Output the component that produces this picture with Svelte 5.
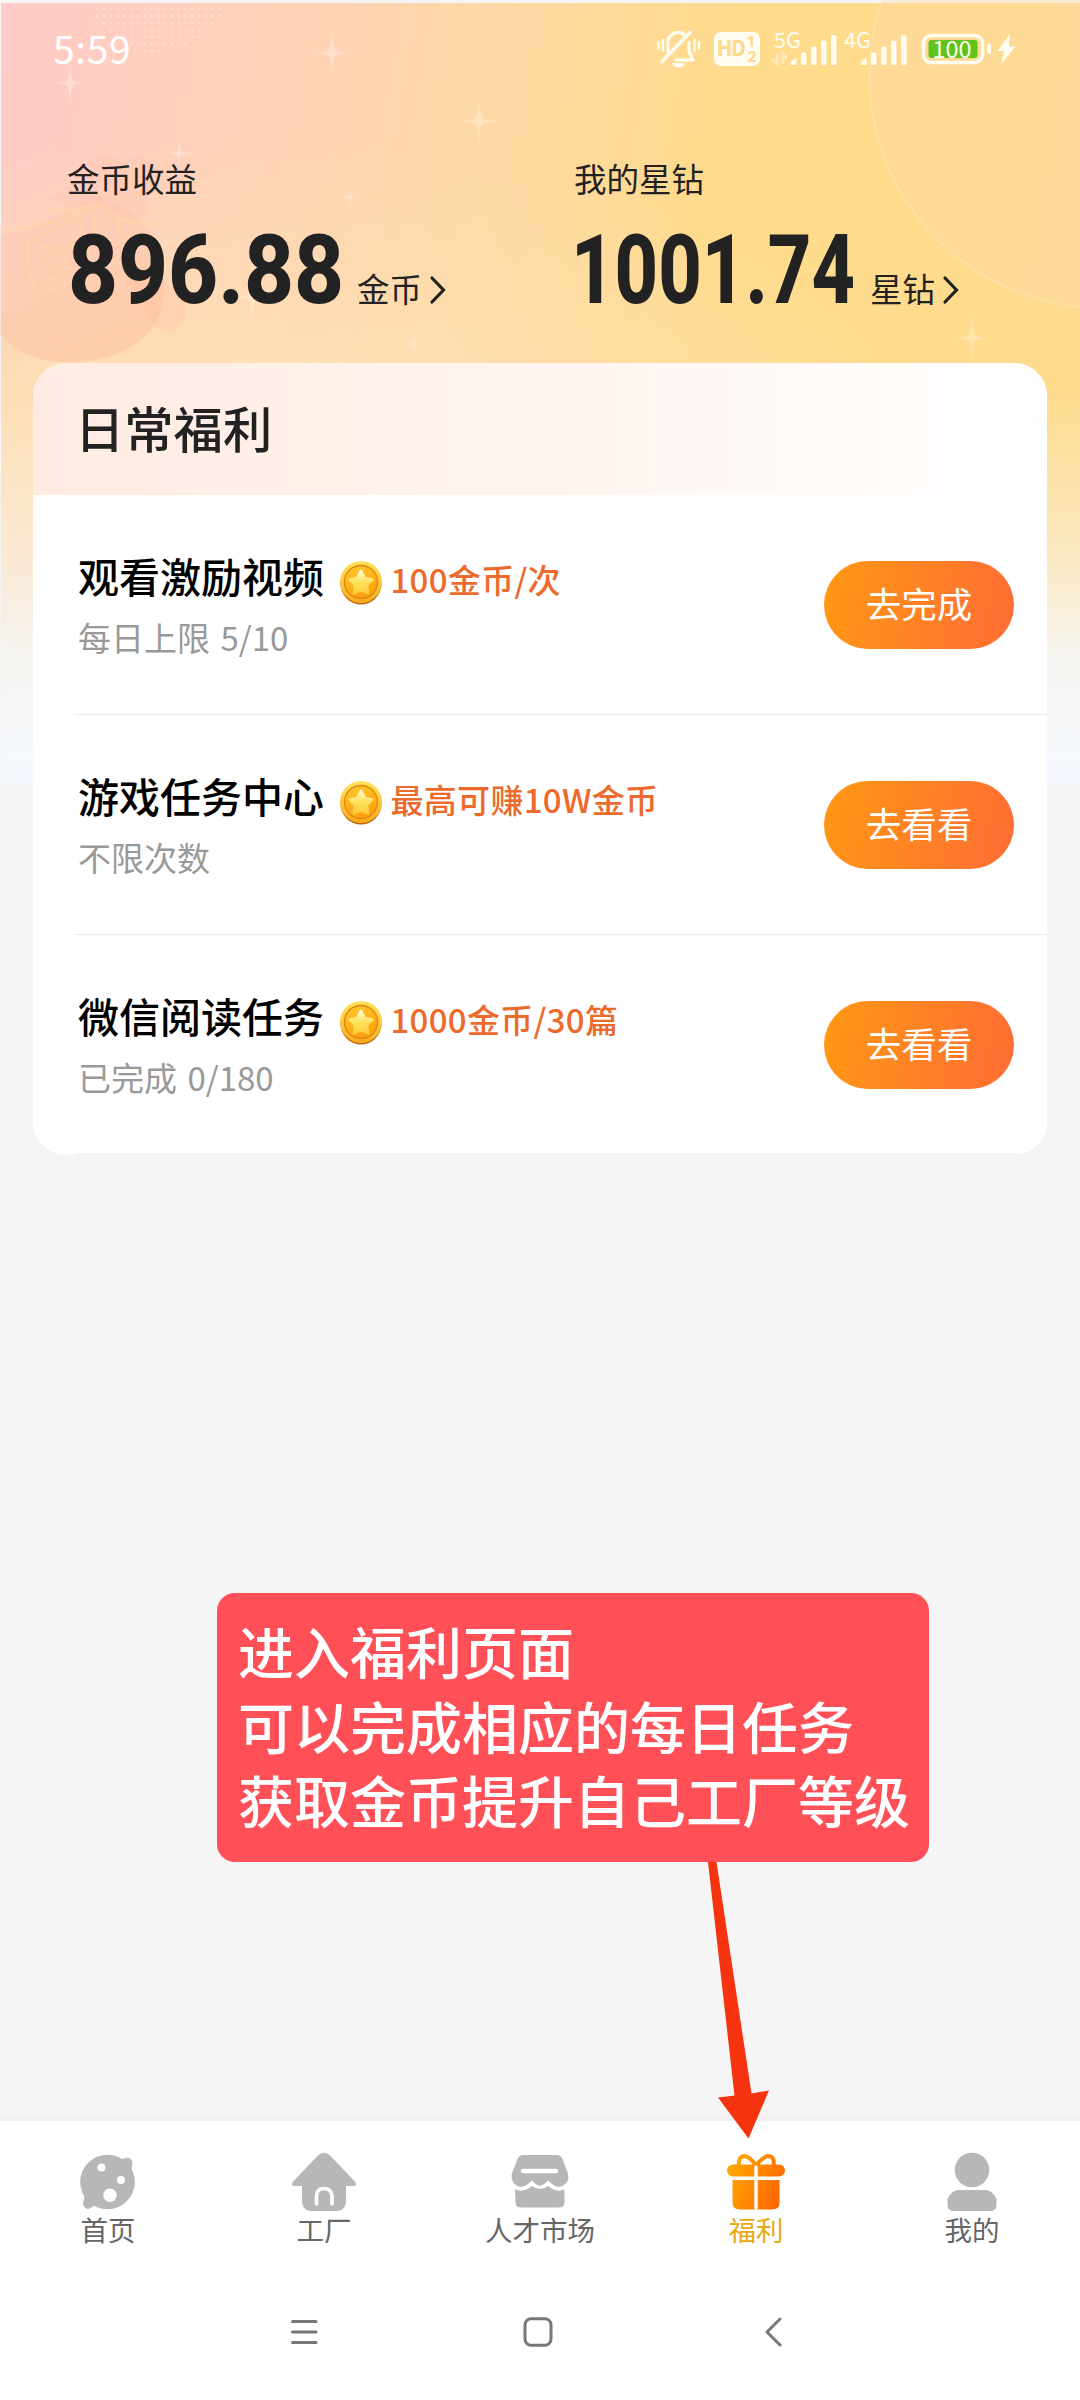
<script lang="ts">
	const balances = [
		{ id: 'coin', label: '金币收益', value: '896.88', unit: '金币', width: 288, start: 1, length: 276 },
		{ id: 'diamond', label: '我的星钻', value: '1001.74', unit: '星钻', width: 294, start: -3, length: 284 },
	];

	const tasks = [
		{ id: 'video', title: '观看激励视频', reward: '100金币/次', hint: '每日上限 5/10', action: '去完成' },
		{ id: 'game', title: '游戏任务中心', reward: '最高可赚10W金币', hint: '不限次数', action: '去看看' },
		{ id: 'read', title: '微信阅读任务', reward: '1000金币/30篇', hint: '已完成 0/180', action: '去看看' },
	];

	const tabs = [
		{ id: 'home', label: '首页' },
		{ id: 'factory', label: '工厂' },
		{ id: 'market', label: '人才市场' },
		{ id: 'welfare', label: '福利' },
		{ id: 'mine', label: '我的' },
	];

	const tipLines = ['进入福利页面', '可以完成相应的每日任务', '获取金币提升自己工厂等级'];

	// cx, cy, half width, half height, opacity
	const sparkles = [
		[70, 83, 17, 21, 0.3],
		[332, 53, 20, 23, 0.3],
		[479, 121, 21, 26, 0.28],
		[179, 153, 11, 13, 0.3],
		[350, 197, 9, 11, 0.25],
		[252, 297, 20, 31, 0.25],
		[414, 344, 10, 12, 0.25],
		[824, 270, 20, 12, 0.2],
		[972, 338, 20, 25, 0.25],
	];

	// each row: start x, number of dots
	const dotRows = [
		[97, 19], [97, 19], [104, 17], [111, 14], [118, 13], [131, 9], [145, 3],
	];

	// horizontal squeeze of the balance digits
	const squeeze = 0.89;

	let active = $state('welfare');

	function sparklePath(cx: number, cy: number, w: number, h: number) {
		const k = w * 0.2;
		return `M${cx} ${cy - h}Q${cx + 1} ${cy - k} ${cx + k} ${cy - k * 0.7}Q${cx + k} ${cy - 1} ${cx + w} ${cy}Q${cx + k} ${cy + 1} ${cx + k} ${cy + k * 0.7}Q${cx + 1} ${cy + k} ${cx} ${cy + h}Q${cx - 1} ${cy + k} ${cx - k} ${cy + k * 0.7}Q${cx - k} ${cy + 1} ${cx - w} ${cy}Q${cx - k} ${cy - 1} ${cx - k} ${cy - k * 0.7}Q${cx - 1} ${cy - k} ${cx} ${cy - h}Z`;
	}
</script>

<div class="screen">
	<div class="hero-bg">
		<svg class="hero-art" width="1080" height="390" viewBox="0 0 1080 390">
			<defs>
				<linearGradient id="bag" x1="0" y1="0" x2="0.3" y2="1">
					<stop offset="0" stop-color="#ffa898" stop-opacity="0.1" />
					<stop offset="1" stop-color="#ffa088" stop-opacity="0.25" />
				</linearGradient>
			</defs>
			<path d="M0 236C40 226 75 205 98 193C125 205 150 222 158 250C166 275 168 305 154 325C128 370 30 376 0 334Z" fill="url(#bag)" />
			<path d="M122 270Q150 260 168 282Q196 305 182 322Q172 343 154 325Q136 298 122 270Z" fill="#ffb09a" opacity="0.18" />
			<path d="M82 165Q105 150 124 160Q148 148 158 172Q142 190 150 216Q115 226 96 206Q60 212 48 198Q76 186 82 165Z" fill="#ffa898" opacity="0.09" />
			<g fill="none" stroke="#ffd8a8" stroke-width="4" stroke-linecap="round" opacity="0.5">
				<path d="M0 232Q55 225 98 206Q125 225 156 224" />
				<path d="M44 208Q70 214 96 204M118 214Q116 232 132 244M94 212Q98 232 88 250" />
				<path d="M27 242L80 218Q86 248 82 276L38 296Q26 270 27 242Z" />
				<path d="M38 250Q52 240 56 250T74 244M36 268L52 254M44 282L70 272M52 262L60 272M44 272L66 262" />
			</g>
			<g fill="#fff" opacity="0.3">
				{#each dotRows as [start, count], r}
					{#each Array(count) as _, c}
						<circle cx={start + c * 6.8} cy={9 + r * 7} r="1.3" />
					{/each}
				{/each}
			</g>
			<circle cx="1102.5" cy="75" r="233" fill="#fcd9a6" fill-opacity="0.4" stroke="#ffe8bd" stroke-width="2" stroke-opacity="0.4" />
			{#each sparkles as [cx, cy, w, h, opacity]}
				<path d={sparklePath(cx, cy, w, h)} fill="#fff" {opacity} />
			{/each}
		</svg>
	</div>

	<header class="status-bar">
		<span class="clock">5:59</span>
		<svg class="status-icons" width="364" height="46" viewBox="0 0 364 46">
			<!-- muted bell -->
			<g transform="translate(0 1.5)">
				<g fill="none" stroke="#fffdf2" stroke-linecap="round" stroke-width="3.2">
					<path d="M12 25V17A10 10 0 0 1 29 9M33 16V25L37 33.5H20" stroke-linejoin="round" />
					<path d="M6 35L34 6" stroke-width="3.6" />
					<path d="M2.5 16V22M7 13.5V24M43 16V22M38.5 13.5V24" stroke-width="2.4" />
				</g>
				<path d="M16 36.5H29Q27.5 41 22.5 41T16 36.5Z" fill="#fffdf2" />
			</g>
			<!-- HD badge -->
			<rect x="58" y="7" width="46" height="34" rx="7" fill="#fffdf2" />
			<g class="badge-text">
				<text x="61.5" y="31" font-size="21" textLength="28" lengthAdjust="spacingAndGlyphs">HD</text>
				<text x="91.5" y="22" font-size="14.5">1</text>
				<text x="91.5" y="37" font-size="14.5">2</text>
			</g>
			<g class="net-text">
				<text x="118" y="22.5" textLength="27" lengthAdjust="spacingAndGlyphs">5G</text>
				<text x="188" y="22.5" textLength="27" lengthAdjust="spacingAndGlyphs">4G</text>
			</g>
			<path d="M121 29V39L116 34M127 39V29L131 33" fill="none" stroke="#fff" stroke-opacity="0.4" stroke-width="3" />
			<g fill="#fffdf2">
				{#each [134, 204] as x}
					<path d="M{x + 1} 40Q{x - 1} 36 {x + 6.5} 33V40Z" />
					<rect x={x + 11} y="27.5" width="5.5" height="12.5" rx="2" />
					<rect x={x + 21} y="21.5" width="5.5" height="18.5" rx="2" />
					<rect x={x + 31} y="15.5" width="5.5" height="24.5" rx="2" />
					<rect x={x + 41} y="10" width="5.5" height="30" rx="2" />
				{/each}
			</g>
			<!-- battery -->
			<rect x="267.5" y="10.5" width="59" height="27" rx="8" fill="none" stroke="#fffdf2" stroke-width="3.5" />
			<rect x="272.5" y="15" width="49" height="18" rx="3" fill="#62c21d" />
			<rect x="331" y="19" width="4" height="10" rx="2" fill="#fffdf2" />
			<text class="battery-text" x="276.5" y="32.5" textLength="39" lengthAdjust="spacingAndGlyphs">100</text>
			<path d="M354 9L341.5 26H348L345.5 39L359.5 21.5H353Z" fill="#fffdf2" />
		</svg>
	</header>

	<section class="balances">
		{#each balances as item (item.id)}
			<div class="balance">
				<span class="balance-label">{item.label}</span>
				<div class="balance-row">
					<svg class="balance-value" width={item.width} height="78" viewBox="0 0 {item.width} 78">
						<text
							transform="translate({item.start} 73) scale({squeeze} 1)"
							textLength={item.length / squeeze}
							lengthAdjust="spacingAndGlyphs">{item.value}</text>
					</svg>
					<span class="balance-unit">{item.unit}</span>
					<svg class="chevron" width="18" height="30" viewBox="0 0 18 30">
						<path d="M3 3L14.5 15L3 27" fill="none" stroke="#222" stroke-width="3.2" stroke-linecap="round" />
					</svg>
				</div>
			</div>
		{/each}
	</section>

	<main class="card">
		<h2 class="card-title">日常福利</h2>
		{#each tasks as task (task.id)}
			<div class="task">
				<div class="task-info">
					<div class="task-head">
						<span class="task-title">{task.title}</span>
						<svg class="coin" width="44" height="46" viewBox="0 0 44 46">
							<defs>
								<linearGradient id="coin-rim" x1="0" y1="0" x2="0" y2="1">
									<stop offset="0" stop-color="#ffe45c" />
									<stop offset="1" stop-color="#f9a91a" />
								</linearGradient>
								<linearGradient id="coin-face" x1="0" y1="0" x2="0.4" y2="1">
									<stop offset="0" stop-color="#ffca2e" />
									<stop offset="1" stop-color="#ff9f0e" />
								</linearGradient>
								<linearGradient id="coin-star" x1="0" y1="0" x2="0" y2="1">
									<stop offset="0" stop-color="#fff9cf" />
									<stop offset="0.5" stop-color="#ffe15a" />
									<stop offset="1" stop-color="#ffcf3c" />
								</linearGradient>
							</defs>
							<circle cx="22" cy="24" r="20.5" fill="#b9680f" />
							<circle cx="22" cy="22" r="21" fill="url(#coin-rim)" />
							<circle cx="22" cy="22" r="16.5" fill="url(#coin-face)" stroke="#d98a12" stroke-width="1.3" />
							<path
								d="M22 11L25.7 18.2L33 19.6L27.8 25.2L28.8 33L22 29.8L15.2 33L16.2 25.2L11 19.6L18.3 18.2Z"
								fill="url(#coin-star)"
								stroke="url(#coin-star)"
								stroke-width="3"
								stroke-linejoin="round" />
						</svg>
						<span class="task-reward">{task.reward}</span>
					</div>
					<span class="task-hint">{task.hint}</span>
				</div>
				<button type="button" class="task-btn">{task.action}</button>
			</div>
		{/each}
	</main>

	<div class="tip">
		{#each tipLines as line}
			<span>{line}</span>
		{/each}
		<svg class="tip-arrow" width="62" height="278" viewBox="0 0 62 278">
			<path d="M0 0H8.5L43.5 231.5L61 228.5L40.5 276.5L10 235.5L26.5 233.5Z" fill="#f5330f" />
		</svg>
	</div>

	<nav class="tab-bar">
		{#each tabs as tab (tab.id)}
			<button type="button" class="tab" class:active={active === tab.id} onclick={() => (active = tab.id)}>
				<svg width="68" height="60" viewBox="0 0 68 60" fill="#b7b7b7">
					{#if tab.id === 'home'}
						<circle cx="33.5" cy="30" r="27.3" />
						<path d="M44.5 8.5L51.5 6.5A4.7 4.7 0 0 1 58 11.5L56.5 19.5ZM21.5 52.5L14.5 56.5A4.8 4.8 0 0 1 9.5 51.5L11.5 42.5Z" stroke="#b7b7b7" stroke-linejoin="round" />
						<circle cx="27.5" cy="15.5" r="4" fill="#fff" />
						<circle cx="47" cy="28" r="4" fill="#fff" />
						<circle cx="36" cy="43.3" r="6.7" fill="#fff" />
					{:else if tab.id === 'factory'}
						<path d="M28 3.5Q34 -2 40 3.5L65.5 30Q67 34 63 34H56V48Q56 59 46 59H22Q12 59 12 48V34H5Q1 34 2.5 30Z" />
						<path d="M26.5 52V44.5Q26.5 36.5 34 36.5T42 44.5V52" fill="none" stroke="#fff" stroke-width="3.6" stroke-linecap="round" />
					{:else if tab.id === 'market'}
						<path d="M17.5 3H50.5Q55 3 56.5 7L61.5 20Q64 27 60 31.5Q53 38 46 32L42 28.5L39.5 31Q34 36 29.5 32L26 28.5L22 32Q14.5 38 8 31.5Q4 26 6.5 20L11.5 7Q13 3 17.5 3Z" />
						<path d="M9 37.5Q18 41 26 34Q34 40 42 34Q50 41 58.5 37.5V50Q58.5 55.5 53 55.5H15Q9.5 55.5 9.5 50Z" />
						<path d="M17 19H50" stroke="#fff" stroke-width="4.4" stroke-linecap="round" />
					{:else if tab.id === 'welfare'}
						<defs>
							<linearGradient id="gift" gradientUnits="userSpaceOnUse" x1="6" y1="20" x2="60" y2="44">
								<stop offset="0" stop-color="#ffa800" />
								<stop offset="1" stop-color="#ff6600" />
							</linearGradient>
						</defs>
						<rect x="5" y="12.5" width="58" height="12" rx="6" fill="url(#gift)" />
						<path d="M10.5 28H57.5V50.5Q57.5 57.5 50 57.5H18Q10.5 57.5 10.5 50.5Z" fill="url(#gift)" />
						<path d="M17 14Q16 4 23 4Q27 4.5 34 13Q42 4.5 46 4Q53 4 51.5 14M30 14H38" fill="none" stroke="url(#gift)" stroke-width="4" />
						<path d="M34 15V56.5" stroke="#fff" stroke-width="3.4" stroke-linecap="round" />
					{:else}
						<circle cx="34" cy="18" r="17.3" />
						<path d="M20 38H48Q55 38.5 58.5 47.5V53Q58.5 59 52 59H16Q9.5 59 9.5 53V47.5Q13 38.5 20 38Z" />
					{/if}
				</svg>
				<span>{tab.label}</span>
			</button>
		{/each}
	</nav>

	<div class="system-nav">
		<svg width="30" height="30" viewBox="0 0 30 30">
			<path d="M3.5 4.5H27M3.5 15H27M3.5 25.5H27" />
		</svg>
		<svg width="30" height="30" viewBox="0 0 30 30">
			<rect x="2" y="1.8" width="26" height="26.4" rx="6" />
		</svg>
		<svg width="30" height="30" viewBox="0 0 30 30">
			<path d="M23 2L10 15L23 28" />
		</svg>
	</div>
</div>

<style>
	:global(body) {
		background: #f5f5f5;
	}

	.screen {
		position: relative;
		display: flex;
		flex-direction: column;
		width: 1080px;
		height: 2400px;
		box-sizing: border-box;
		padding-top: 3px;
		overflow: hidden;
		background: #f5f5f5;
		font-family: 'Noto Sans CJK SC', sans-serif;
		color: #222;
	}

	.hero-bg {
		position: absolute;
		top: 3px;
		left: 1px;
		right: 0;
		height: 781px;
		background:
			linear-gradient(to bottom, rgba(245, 249, 255, 0) 50%, rgba(247, 244, 236, 0.55) 71%, #f6f5f1 84%, #f5f9ff 99%),
			radial-gradient(ellipse 740px 330px at 200px 460px, rgba(254, 224, 180, 1) 20%, rgba(254, 224, 180, 0)),
			linear-gradient(100deg, #ffcac8 0%, #ffcfbf 13%, #ffd3b3 28%, #fed9a4 42%, #ffdb8c 62%, #ffdb8c 72%, #fedb90 100%);
	}

	.hero-art {
		position: absolute;
		top: -3px;
		left: -1px;
	}

	.status-bar {
		position: relative;
		display: flex;
		justify-content: space-between;
		align-items: flex-start;
		box-sizing: border-box;
		height: 147px;
		padding: 22px 60px 0 53px;
	}

	.clock {
		margin-top: -4px;
		font-size: 39px;
		line-height: 52px;
		color: #fff;
		letter-spacing: 0.6px;
	}

	.status-icons {
		overflow: visible;
	}

	.badge-text {
		font-family: Inter, sans-serif;
		font-weight: 800;
		fill: #fdda8e;
	}

	.net-text {
		font-size: 21px;
		fill: #fffdf2;
	}

	.battery-text {
		font-size: 24px;
		fill: #fffdf2;
	}

	.balances {
		position: relative;
		display: grid;
		grid-template-columns: 507px 1fr;
		height: 190px;
		padding-left: 67px;
	}

	.balance {
		display: flex;
		flex-direction: column;
	}

	.balance-label,
	.balance-unit {
		font-size: 32.5px;
		line-height: 48px;
	}

	.balance-label {
		margin-top: 4px;
	}

	.balance-row {
		display: flex;
		align-items: flex-end;
		margin-top: 28px;
	}

	.balance-value {
		overflow: visible;
	}

	.balance-value text {
		font-family: Roboto, sans-serif;
		font-weight: 800;
		font-size: 97px;
		fill: #222;
	}

	.balance-unit {
		margin-left: 2px;
		margin-bottom: -4px;
	}

	.chevron {
		margin-left: 7px;
		margin-bottom: 3px;
	}

	.card {
		position: relative;
		margin: 23px 33px 0;
		height: 792px;
		border-radius: 33px;
		background: #fff;
		overflow: hidden;
	}

	.card-title {
		margin: 0;
		padding-left: 42px;
		height: 132px;
		font-size: 49.3px;
		line-height: 128px;
		font-weight: 500;
		background: linear-gradient(to right, #ffebe2, #fff6f1 57%, #fff);
	}

	.task {
		display: flex;
		justify-content: space-between;
		align-items: center;
		box-sizing: border-box;
		height: 220px;
		margin-left: 41px;
		padding: 0 33px 0 4px;
		border-bottom: 1px solid #ebebeb;
	}

	.task-info {
		display: flex;
		flex-direction: column;
	}

	.task-head {
		display: flex;
		align-items: center;
		height: 58px;
	}

	.task-title {
		margin-top: -4px;
		font-size: 41px;
		font-weight: 500;
		color: #000;
	}

	.coin {
		margin: 12px 8px 0 14.5px;
	}

	.task-reward {
		margin-top: 4px;
		font-size: 33px;
		font-weight: 500;
		letter-spacing: 0.3px;
		color: #ec6b2c;
	}

	.task-hint {
		margin-top: 7px;
		font-size: 33px;
		line-height: 48px;
		word-spacing: 3px;
		color: #999;
	}

	.task-btn {
		width: 190px;
		height: 88px;
		padding: 0 0 4px;
		border: none;
		border-radius: 44px;
		background: linear-gradient(100deg, #ff9814, #ff6c35);
		color: #fff;
		font-family: inherit;
		font-size: 35.5px;
	}

	.tip {
		position: absolute;
		top: 1593px;
		left: 217px;
		display: flex;
		flex-direction: column;
		box-sizing: border-box;
		width: 712px;
		height: 269px;
		padding: 20px 21px;
		border-radius: 18px;
		background: #ff5057;
		color: #fff;
		font-size: 56px;
		font-weight: 500;
		line-height: 74.5px;
		white-space: nowrap;
		z-index: 2;
	}

	.tip-arrow {
		position: absolute;
		left: 490.5px;
		top: 269px;
	}

	.tab-bar {
		position: relative;
		display: flex;
		margin-top: auto;
		height: 144px;
		background: #fff;
		box-shadow: 0 -2px 6px rgba(0, 0, 0, 0.04);
	}

	.tab {
		flex: 1;
		display: flex;
		flex-direction: column;
		align-items: center;
		padding: 31px 0 0;
		border: none;
		background: none;
		font-family: inherit;
		font-size: 27.5px;
		line-height: 40px;
		color: #666;
	}

	.tab span {
		margin-top: -3px;
	}

	.tab.active {
		color: #e8a914;
	}

	.system-nav {
		display: flex;
		justify-content: center;
		gap: 204px;
		box-sizing: border-box;
		height: 135px;
		padding: 52px 4px 0 0;
		background: #fff;
	}

	.system-nav svg {
		fill: none;
		stroke: #777;
		stroke-width: 3;
		stroke-linecap: round;
		stroke-linejoin: round;
	}
</style>
